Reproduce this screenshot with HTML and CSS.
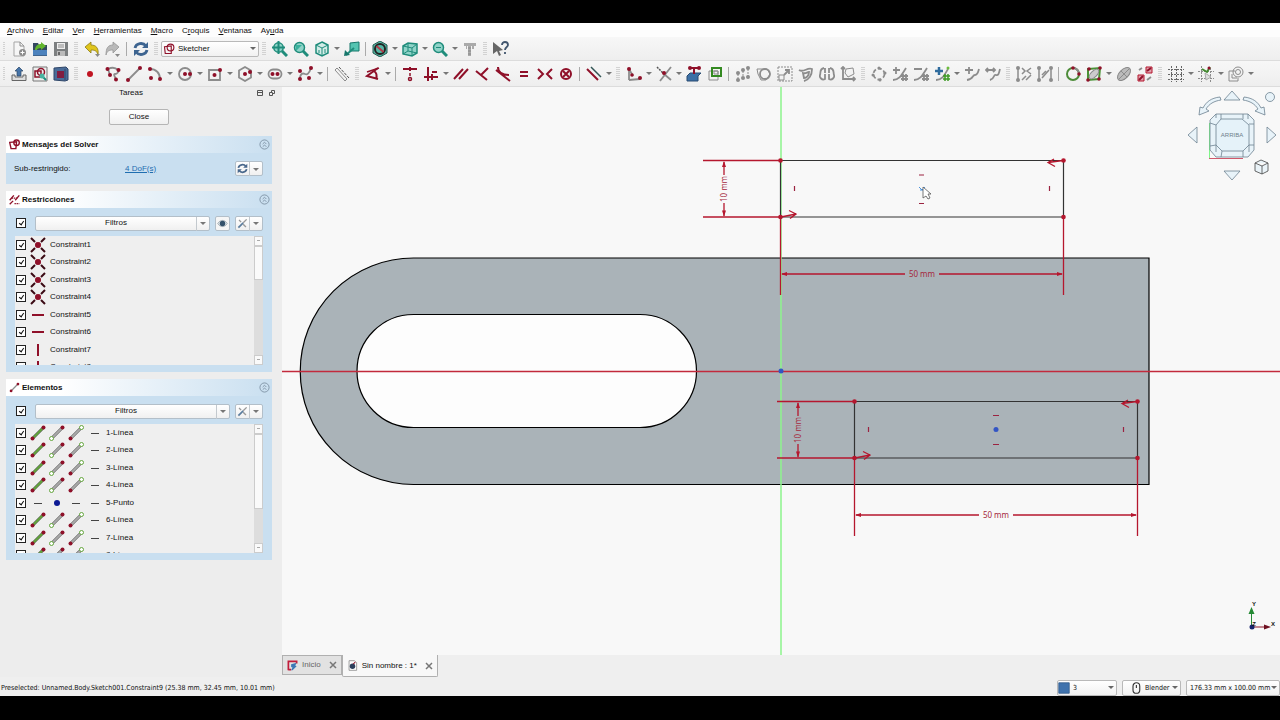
FILE: index.html
```
<!DOCTYPE html>
<html lang="es">
<head>
  <meta charset="UTF-8">
  <meta name="viewport" content="width=device-width, initial-scale=1.0">
  <title>Sin nombre : 1* - FreeCAD</title>
  <link rel="stylesheet" href="styles.css">
</head>
<body>

  <nav class="menubar">
    <button><u>A</u>rchivo</button>
    <button><u>E</u>ditar</button>
    <button><u>V</u>er</button>
    <button><u>H</u>erramientas</button>
    <button><u>M</u>acro</button>
    <button>C<u>r</u>oquis</button>
    <button><u>V</u>entanas</button>
    <button>Ay<u>u</u>da</button>
  </nav>

  <!-- File, view and navigation tools -->
  <div class="toolbar">
    <span class="grip"></span>
    <button class="tool" aria-label="Nuevo"><svg viewBox="0 0 16 16"><path class="paper" d="M3 1h6l4 4v10H3z"/><path class="g" d="M9 1v4h4"/><circle class="gf" cx="11.500" cy="11.500" r="3.500"/><path class="w" d="M9.500 11.500h4M11.500 9.500v4"/></svg></button>
    <button class="tool" aria-label="Abrir"><svg viewBox="0 0 16 16"><path fill="#33475f" d="M1 2h5l1 2h8v11H1z"/><path fill="#4c82bd" d="M1 9h14v5.500H1z"/><path fill="#61b42c" d="M3 9c0-4 3-6 6-6V1l5 4-5 4V7C6 7 5 8 5 9z"/></svg></button>
    <button class="tool" aria-label="Guardar"><svg viewBox="0 0 16 16"><path fill="#7c7f80" d="M1 1h14v14H1z"/><path fill="#eee" d="M4 2h8v6H4z"/><path fill="#bbb" d="M4 10h8v5H4z"/><path class="g" d="M5 4h6M5 6h6"/><path fill="#666" d="M5 11h2v3H5z"/></svg></button>
    <span class="grip"></span>
    <button class="tool" aria-label="Deshacer"><svg viewBox="0 0 16 16"><path fill="#e0c51c" stroke="#8a7a14" stroke-width=".8" d="M1 6l6-5v3c5 0 8 3 7 10-1-4-3-5-7-5v3z"/><path fill="#888" d="M11 13h5l-2.500 3z"/></svg></button>
    <button class="tool" aria-label="Rehacer"><svg viewBox="0 0 16 16"><path fill="#b9b9b9" stroke="#969696" stroke-width=".8" d="M14 6L8 1v3C3 4 1 7 1 14c1-4 3-5 7-5v3z"/><path fill="#888" d="M10 13h5l-2.500 3z"/></svg></button>
    <span class="sep"></span>
    <button class="tool" aria-label="Recargar"><svg viewBox="0 0 16 16"><path stroke="#3d6490" stroke-width="2.800" d="M2 7c1-5 8-6 11-2M14 9c-1 5-8 6-11 2"/><path fill="#3d6490" d="M15 1v6H9zM1 15V9h6z"/></svg></button>
    <span class="grip"></span>
    <label class="combo workbench">
      <svg viewBox="0 0 16 16"><path class="r" d="M2 5l9-1v10H3z"/><circle class="r" cx="10" cy="6" r="4.500"/></svg>
      <select aria-label="Banco de trabajo"><option>Sketcher</option></select>
    </label>
    <span class="grip"></span>
    <button class="tool" aria-label="Ajustar todo"><svg viewBox="0 0 16 16"><circle class="tb2" cx="6.500" cy="6.500" r="4.700"/><path class="t" stroke-width="3" d="M10 10l5 5"/><path class="t2" d="M6.500 0v13M0 6.500h13"/></svg></button>
    <button class="tool" aria-label="Ajustar selección"><svg viewBox="0 0 16 16"><circle class="tb2" cx="6.500" cy="6.500" r="5"/><path class="t" stroke-width="3" d="M10 10l5 5"/><path fill="#39b19c" d="M3 10V4h6z"/></svg></button>
    <button class="tool" aria-label="Isométrica"><svg viewBox="0 0 16 16"><path class="tb" d="M8 1l6 3v8l-6 3-6-3V4z"/><path class="t" d="M2 4l6 3 6-3M8 7v8M11 8v4M5 9v3"/></svg></button><button class="arrow" aria-label="Más vistas"></button>
    <button class="tool" aria-label="Alinear"><svg viewBox="0 0 16 16"><path fill="#54c4b1" stroke="#17766b" d="M6 2l9-1v9H6z"/><path class="t" stroke-width="2" d="M10 7l-8 7"/><path fill="#17766b" d="M0 15l1-6 5 5z"/></svg></button>
    <span class="sep"></span>
    <button class="tool" aria-label="Estilo de dibujo"><svg viewBox="0 0 16 16"><path fill="#54b8a5" stroke="#24574f" d="M8 0l7 4v8l-7 4-7-4V4z"/><circle cx="8" cy="8" r="5" stroke="#222" stroke-width="2"/><path stroke="#b33a48" stroke-width="2" d="M4.500 5l7 6"/></svg></button><button class="arrow" aria-label="Más estilos"></button>
    <button class="tool" aria-label="Caja"><svg viewBox="0 0 16 16"><path class="tb2" d="M1 5l5-3 9 1v9l-5 3-9-2z"/><path class="t" d="M1 5l9 2 5-4M10 7v8M6 2v8l-5 3M6 10l9 2"/></svg></button><button class="arrow" aria-label="Más cajas"></button>
    <button class="tool" aria-label="Zoom"><svg viewBox="0 0 16 16"><circle class="tb2" cx="6.500" cy="6.500" r="5"/><path class="t" stroke-width="3" d="M10 10l5 5"/><path class="t" d="M4 6.500h5"/></svg></button><button class="arrow" aria-label="Más zoom"></button>
    <button class="tool" aria-label="Medir"><svg viewBox="0 0 16 16"><path fill="#aaa" d="M2 2h12v3h-2v3h-2V5H9v10H6V5H5v3H4V5H2z"/><path stroke="#888" d="M6 7h3M6 10h3M6 13h3"/></svg></button>
    <span class="grip"></span>
    <button class="tool" aria-label="¿Qué es esto?"><svg viewBox="0 0 16 16"><path fill="#666" d="M0 1l10 8-4 1 2 4-2 1-2-5-4 3z"/><path stroke="#42566e" stroke-width="1.800" d="M9 4c0-4 6-4 6 0 0 2-3 2-3 5M12 11v2"/></svg></button>
  </div>

  <!-- Sketcher tools -->
  <div class="toolbar">
    <span class="grip"></span>
    <button class="tool" aria-label="Salir del croquis"><svg viewBox="0 0 16 16"><path fill="#ddd" stroke="#666" d="M1 9h3v2h8V9h3v5.500H1z"/><path fill="#4674a8" stroke="#2b4666" stroke-width=".7" d="M8 1l4 4h-2v5H6V5H4z"/></svg></button>
    <button class="tool" aria-label="Ver croquis"><svg viewBox="0 0 16 16"><path fill="#eee" stroke="#777" d="M1 1h14v14H1z"/><path class="r" d="M3 5h6v6H3z"/><circle class="r" cx="9" cy="6" r="3.500"/><path class="t" stroke-width="2" d="M10 10l4 4"/><circle fill="#49b3a0" cx="10" cy="10" r="2.500"/></svg></button>
    <button class="tool" aria-label="Ver sección"><svg viewBox="0 0 16 16"><path fill="#4a6c98" stroke="#2f4668" d="M1 2l12-1 2 2v11l-3 1-11-1z"/><path fill="#811d40" d="M4 5h7v7H4z"/><path stroke="#2f4668" d="M12 3v11"/></svg></button>
    <span class="grip"></span>
    <button class="tool" aria-label="Punto"><svg viewBox="0 0 16 16"><circle fill="#c01522" cx="6" cy="8" r="3"/></svg></button>
    <button class="tool" aria-label="Polilínea"><svg viewBox="0 0 16 16"><path class="g2" d="M3 3c4-2 8-1 10 1 1 2-1 4-3 4s0 3 1 5M3 3l2 6"/><circle class="rf" cx="2.500" cy="3" r="2"/><circle class="rf" cx="13.500" cy="4" r="2"/><circle class="rf" cx="5" cy="9" r="2"/><circle class="rf" cx="11" cy="13.500" r="2"/></svg></button>
    <button class="tool" aria-label="Línea"><svg viewBox="0 0 16 16"><path class="g2" d="M2 14L14 2"/><circle class="rf" cx="2" cy="14" r="2"/><circle class="rf" cx="14" cy="2" r="2"/></svg></button>
    <button class="tool" aria-label="Arco"><svg viewBox="0 0 16 16"><path class="g2" d="M3 3c6 0 10 4 10 10"/><circle class="rf" cx="3" cy="3" r="2"/><circle class="rf" cx="13" cy="13" r="2"/><circle class="rf" cx="4" cy="12" r="2"/></svg></button><button class="arrow" aria-label="Más arcos"></button>
    <button class="tool" aria-label="Círculo"><svg viewBox="0 0 16 16"><circle class="g2" cx="8" cy="8" r="6"/><circle class="rf" cx="8" cy="8" r="2"/><circle class="rf" cx="13" cy="8" r="2"/></svg></button><button class="arrow" aria-label="Más círculos"></button>
    <button class="tool" aria-label="Rectángulo"><svg viewBox="0 0 16 16"><path class="g2" d="M2 4h11v10H2z"/><circle class="rf" cx="7.500" cy="9" r="2"/><circle class="rf" cx="13" cy="4" r="2"/></svg></button><button class="arrow" aria-label="Más rectángulos"></button>
    <button class="tool" aria-label="Hexágono"><svg viewBox="0 0 16 16"><path class="g2" d="M8 1l6 3.500v7L8 15l-6-3.500v-7z"/><circle class="rf" cx="8" cy="8" r="2"/><circle class="rf" cx="13" cy="6" r="2"/></svg></button><button class="arrow" aria-label="Más polígonos"></button>
    <button class="tool" aria-label="Ranura"><svg viewBox="0 0 16 16"><rect class="g2" x="1.500" y="3.500" width="13" height="9" rx="4.500"/><circle class="rf" cx="5.500" cy="8" r="2"/><circle class="rf" cx="10.500" cy="8" r="2"/></svg></button><button class="arrow" aria-label="Más ranuras"></button>
    <button class="tool" aria-label="B-spline"><svg viewBox="0 0 16 16"><path class="g2" d="M3 13c0-6 3-6 5-5s4 0 6-6"/><circle class="rf" cx="3" cy="13" r="2"/><circle class="rf" cx="3" cy="5" r="2"/><circle class="rf" cx="14" cy="2" r="2"/><circle class="rf" cx="12" cy="12" r="2"/></svg></button><button class="arrow" aria-label="Más curvas"></button>
    <span class="sep"></span>
    <button class="tool" aria-label="Geometría de construcción"><svg viewBox="0 0 16 16"><path class="g" d="M1 4l10 11 2-2L3 2z"/><path stroke="#555" stroke-dasharray="3 1" d="M5 1l10 11"/></svg></button>
    <span class="grip"></span>
    <button class="tool" aria-label="Cota"><svg viewBox="0 0 16 16"><path class="r2" d="M13 2L2 10l11 3"/><path class="r2" d="M9 5c3 2 3 5 2 8"/><path class="r" d="M2 6l12-4"/></svg></button><button class="arrow" aria-label="Más cotas"></button>
    <span class="sep"></span>
    <button class="tool" aria-label="Coincidente"><svg viewBox="0 0 16 16"><path class="r2" d="M1 3h14M8 1v4"/><circle class="r" cx="8" cy="13" r="1.500"/><path class="r" d="M8 7v3"/></svg></button>
    <button class="tool" aria-label="Horizontal o vertical"><svg viewBox="0 0 16 16"><path class="r2" d="M5 1v14M1 11h14M9 6h5M9 8v6"/></svg></button><button class="arrow" aria-label="Más restricciones"></button>
    <button class="tool" aria-label="Paralela"><svg viewBox="0 0 16 16"><path class="r2" d="M1 13L10 3M6 13l9-10"/></svg></button>
    <button class="tool" aria-label="Perpendicular"><svg viewBox="0 0 16 16"><path class="r2" d="M2 5l11 9M14 2L7 9"/></svg></button>
    <button class="tool" aria-label="Tangente"><svg viewBox="0 0 16 16"><path class="r2" d="M3 1c0 5 4 8 11 8M1 4l14 11"/></svg></button>
    <button class="tool" aria-label="Igual"><svg viewBox="0 0 16 16"><path class="r2" d="M4 6h8M4 10h8"/></svg></button>
    <button class="tool" aria-label="Simetría"><svg viewBox="0 0 16 16"><path class="r2" d="M1 3l5 5-5 5M15 3l-5 5 5 5"/></svg></button>
    <button class="tool" aria-label="Bloquear"><svg viewBox="0 0 16 16"><circle class="r2" cx="8" cy="8" r="5"/><path class="r2" d="M5 5l6 6M11 5l-6 6"/></svg></button>
    <span class="sep"></span>
    <button class="tool" aria-label="Restricción de referencia"><svg viewBox="0 0 16 16"><path class="r2" d="M1 3l11 11"/><path stroke="#355" stroke-width="1.500" d="M5 1l10 10"/></svg></button><button class="arrow" aria-label="Más opciones"></button>
    <span class="grip"></span>
    <button class="tool" aria-label="Redondeo"><svg viewBox="0 0 16 16"><path class="g2" d="M3 2v12M3 14l11-1M3 3l4 7"/><circle class="rf" cx="3" cy="3" r="2"/><circle class="rf" cx="6" cy="9" r="1.800"/><circle class="rf" cx="14" cy="12" r="2"/></svg></button><button class="arrow" aria-label="Más redondeos"></button>
    <button class="tool" aria-label="Recortar"><svg viewBox="0 0 16 16"><path stroke="#555" stroke-width="1.500" stroke-dasharray="2 1" d="M1 1l7 7"/><path class="g2" d="M15 1L4 15M8 8l7 6"/><circle class="rf" cx="8" cy="7" r="2"/></svg></button><button class="arrow" aria-label="Más recortes"></button>
    <button class="tool" aria-label="Geometría externa"><svg viewBox="0 0 16 16"><path fill="#3c70a6" stroke="#284b70" d="M1 10l3-3h11l-3 3v5H1z"/><path class="r2" d="M4 2h9M8 2v6"/><circle class="rf" cx="4" cy="2" r="2"/><circle class="rf" cx="13" cy="2" r="2"/></svg></button>
    <button class="tool" aria-label="Copia al carbón"><svg viewBox="0 0 16 16"><path class="g" d="M2 5h9v9H2z"/><path stroke="#348a22" stroke-width="2" d="M5 2h9v8H5z"/><path class="g" d="M7 5h4v3H7z"/></svg></button>
    <span class="sep"></span>
    <button class="tool" aria-label="Mover"><svg viewBox="0 0 16 16"><path class="g" stroke-dasharray="2 1" d="M3 8v5M8 5v7M13 3v8"/><g class="gf"><circle cx="3" cy="7" r="2"/><circle cx="3" cy="14" r="2"/><circle cx="8" cy="4" r="2"/><circle cx="8" cy="12" r="2"/><circle cx="13" cy="2" r="2"/><circle cx="13" cy="11" r="2"/></g></svg></button>
    <button class="tool" aria-label="Rotar"><svg viewBox="0 0 16 16"><path class="g" d="M1 3h10l3 5-4 6H5L2 8z"/><circle class="g2" cx="9" cy="8" r="5"/></svg></button>
    <button class="tool" aria-label="Escalar"><svg viewBox="0 0 16 16"><path class="g" stroke-dasharray="2 1" d="M1 1h14v14H1z"/><path class="g" d="M2 9h5v5H2z"/><path class="g2" d="M7 9l5-5M8 4h4v4"/></svg></button>
    <button class="tool" aria-label="Desfase"><svg viewBox="0 0 16 16"><path class="g2" d="M1 4c5 3 8-3 13-1 0 6-3 11-8 12M5 7c3 1 4-1 6-1 0 3-2 6-5 6z"/></svg></button>
    <button class="tool" aria-label="Simetría de copia"><svg viewBox="0 0 16 16"><path class="g2" d="M5 2C0 3 2 7 1 9s2 6 5 4V8M11 2c5 1 3 5 4 7s-2 6-5 4V8M6 2v5M10 2v5"/></svg></button>
    <button class="tool" aria-label="Eliminar alineación"><svg viewBox="0 0 16 16"><path class="g2" d="M3 1v12h12M1 3l2-2 2 2M13 11l2 2-2 2"/><path class="g" d="M6 3l7-1 1 6-6 3-3-4z"/></svg></button>
    <span class="grip"></span>
    <button class="tool" aria-label="Polo"><svg viewBox="0 0 16 16"><circle class="g2" cx="8" cy="8" r="5.500" stroke-dasharray="4 2"/><g class="gf"><circle cx="8" cy="2" r="1.500"/><circle cx="14" cy="7" r="1.500"/><circle cx="2" cy="9" r="1.500"/><circle cx="9" cy="14" r="1.500"/></g></svg></button>
    <button class="tool" aria-label="Aumentar grado"><svg viewBox="0 0 16 16"><path class="g2" d="M4 1v7M1 4h7M1 14c6 0 8-4 13-12M11 8v7M14 8v7M9 10h7M9 13h7"/></svg></button>
    <button class="tool" aria-label="Reducir grado"><svg viewBox="0 0 16 16"><path class="g2" d="M1 3h8M1 14c6 0 8-4 13-12M11 8v7M14 8v7M9 10h7M9 13h7"/></svg></button>
    <button class="tool" aria-label="Aumentar multiplicidad"><svg viewBox="0 0 16 16"><path class="g2" d="M2 14c6 0 8-4 12-11"/><path stroke="#2f6b9d" stroke-width="2.500" d="M5 1v8M1 5h8"/><path stroke="#3e9b25" stroke-width="1.500" d="M11 8v7M14 8v7M9 10h7M9 13h7"/><circle fill="#6bbd3c" cx="14" cy="2" r="1.500"/></svg></button><button class="arrow" aria-label="Más multiplicidad"></button>
    <button class="tool" aria-label="Insertar nudo"><svg viewBox="0 0 16 16"><path class="g2" d="M5 1v7M1 4h8M3 14c7-1 5-5 8-5s3-3 4-6"/></svg></button>
    <button class="tool" aria-label="Unir curvas"><svg viewBox="0 0 16 16"><path class="g2" d="M1 4h9M3 2L1 4l2 2M8 2l2 2-2 2M5 14c5-1 3-6 6-5s3-3 4-6"/></svg></button>
    <span class="grip"></span>
    <button class="tool" aria-label="Seleccionar restricciones"><svg viewBox="0 0 16 16"><path class="g" stroke-width="1.500" d="M2 2v12M6 2l3 3-3 3M15 2l-4 3 4 3M6 14l4-4M10 14l5-5"/><g class="gf"><circle cx="2" cy="2" r="2"/><circle cx="2" cy="14" r="2"/></g></svg></button>
    <button class="tool" aria-label="Seleccionar elementos"><svg viewBox="0 0 16 16"><path class="g" stroke-width="1.500" d="M2 2v12M14 2v12M5 12l7-8M5 9l4-4"/><g class="gf"><circle cx="2" cy="2" r="2"/><circle cx="2" cy="14" r="2"/><circle cx="14" cy="2" r="2"/><circle cx="14" cy="14" r="2"/></g></svg></button>
    <span class="sep"></span>
    <button class="tool" aria-label="Geometría interna"><svg viewBox="0 0 16 16"><circle stroke="#4d8c39" stroke-width="2" cx="8" cy="8" r="6"/><path class="g2" d="M8 2a6 6 0 0 1 6 6"/><circle class="rf" cx="8" cy="2" r="1.800"/><circle class="rf" cx="14" cy="8" r="1.800"/></svg></button>
    <button class="tool" aria-label="Geometría asociada"><svg viewBox="0 0 16 16"><path stroke="#4a9235" stroke-width="2" d="M2 3l12-1-1 11-11 1z"/><ellipse fill="#ccc" stroke="#888" cx="8" cy="8" rx="6" ry="3" transform="rotate(-45 8 8)"/><circle class="rf" cx="3" cy="3" r="1.800"/><circle class="rf" cx="14" cy="2" r="1.800"/><circle class="rf" cx="2" cy="14" r="1.800"/><circle class="rf" cx="13" cy="13" r="1.800"/></svg></button><button class="arrow" aria-label="Más geometría"></button>
    <button class="tool" aria-label="Elipse"><svg viewBox="0 0 16 16"><ellipse fill="#bbb" stroke="#888" cx="8" cy="8" rx="8" ry="4.500" transform="rotate(-45 8 8)"/><path class="g" d="M3 13L13 3M5 5l6 6"/></svg></button>
    <button class="tool" aria-label="Cambiar espacio virtual"><svg viewBox="0 0 16 16"><path fill="#dfa0ab" stroke="#b5172e" d="M9 1h6v6H9zM1 9h6v6H1z"/><path class="r2" d="M10 5l4-3M2 14l4-4"/><path class="g2" d="M2 4l3-2M10 14l4-3"/></svg></button>
    <span class="grip"></span>
    <button class="tool" aria-label="Rejilla"><svg viewBox="0 0 16 16"><path stroke="#666" stroke-dasharray="2 1" d="M3.500 0v16M8.500 0v16M13.500 0v16M0 3.500h16M0 8.500h16M0 13.500h16"/></svg></button><button class="arrow" aria-label="Opciones de rejilla"></button>
    <button class="tool" aria-label="Ajuste"><svg viewBox="0 0 16 16"><path class="g" stroke-dasharray="2 1" d="M3.500 0v16M12.500 2v14M0 5.500h16M0 12.500h16"/><path stroke="#438b2f" stroke-width="2" d="M4 3l5 3 3-5"/><circle class="rf" cx="11" cy="2" r="1.500"/><path fill="#ddd" stroke="#aaa" d="M7 7l6 4-5 3z"/></svg></button><button class="arrow" aria-label="Opciones de ajuste"></button>
    <button class="tool" aria-label="Orden de visualización"><svg viewBox="0 0 16 16"><path class="g" d="M1 5h6M1 5v10h9v-3M4 8v4h5"/><circle class="g" cx="10" cy="6" r="5"/><circle class="g" cx="10" cy="6" r="2.500"/></svg></button><button class="arrow" aria-label="Más orden"></button>
  </div>

  <main class="workspace">

    <aside class="dock">
      <div class="dock-title">
        <h1>Tareas</h1>
        <button aria-label="Acoplar"><svg viewBox="0 0 8 8"><path d="M1.500 1.500h5v5h-5zM1.500 3.500h5"/></svg></button>
        <button aria-label="Flotar"><svg viewBox="0 0 8 8"><path d="M1.500 3.500h3v3h-3zM3.500 3.500v-2h3v3h-2"/></svg></button>
      </div>

      <button class="close-task">Close</button>

      <section class="panel">
        <header>
          <svg viewBox="0 0 16 16"><path class="r2" d="M1 5l10-1-1 10H3z"/><circle class="r2" cx="11" cy="5.500" r="4"/></svg>
          <h2>Mensajes del Solver</h2>
          <button class="fold" aria-label="Plegar"><svg viewBox="0 0 12 12"><circle cx="6" cy="6" r="5"/><path d="M4 5.500l2-2 2 2M4 8.500l2-2 2 2"/></svg></button>
        </header>
        <div class="solver">
          <span>Sub-restringido:</span>
          <a href="#">4 DoF(s)</a>
          <div class="split">
            <button aria-label="Actualizar"><svg viewBox="0 0 16 16"><path stroke="#49688c" stroke-width="2.500" d="M2 7c1-5 8-6 11-2M14 9c-1 5-8 6-11 2"/><path fill="#49688c" d="M15 1v6H9zM1 15V9h6z"/></svg></button>
            <button class="arrow" aria-label="Opciones"></button>
          </div>
        </div>
      </section>

      <section class="panel">
        <header>
          <svg viewBox="0 0 16 16"><path class="r2" d="M1 9l6-7M9 9l6-7M1 15l5-5"/><path class="r2" stroke-dasharray="2 1" d="M8 14h7M4 6h8"/></svg>
          <h2>Restricciones</h2>
          <button class="fold" aria-label="Plegar"><svg viewBox="0 0 12 12"><circle cx="6" cy="6" r="5"/><path d="M4 5.500l2-2 2 2M4 8.500l2-2 2 2"/></svg></button>
        </header>
        <div class="filter">
          <input type="checkbox" aria-label="Mostrar restricciones" checked>
          <div class="split wide">
            <button>Filtros</button>
            <button class="arrow" aria-label="Elegir filtros"></button>
          </div>
          <button class="eye" aria-label="Visibilidad"><svg viewBox="0 0 16 16"><path fill="#dfe6ea" stroke="#8b979f" d="M1 8c4-6 10-6 14 0-4 6-10 6-14 0z"/><circle fill="#34526b" cx="8" cy="8" r="4"/></svg></button>
          <div class="split">
            <button aria-label="Ajustes"><svg viewBox="0 0 16 16"><path stroke="#5b7d9e" stroke-width="2.500" d="M2 14l7-7"/><path stroke="#999" stroke-width="2" d="M9 7l5-5M3 3l3 3M9 9l4 4"/></svg></button>
            <button class="arrow" aria-label="Más ajustes"></button>
          </div>
        </div>
        <div class="list-box">
          <ul class="list" id="constraints"></ul>
          <div class="scroll"><i class="up"></i><b class="short"></b><i class="down"></i></div>
        </div>
      </section>

      <section class="panel">
        <header>
          <svg viewBox="0 0 16 16"><path class="g2" d="M3 13L13 3"/><circle class="rf" cx="3" cy="13" r="2"/><circle class="rf" cx="13" cy="3" r="2"/></svg>
          <h2>Elementos</h2>
          <button class="fold" aria-label="Plegar"><svg viewBox="0 0 12 12"><circle cx="6" cy="6" r="5"/><path d="M4 5.500l2-2 2 2M4 8.500l2-2 2 2"/></svg></button>
        </header>
        <div class="filter">
          <input type="checkbox" aria-label="Mostrar elementos" checked>
          <div class="split wide">
            <button>Filtros</button>
            <button class="arrow" aria-label="Elegir filtros"></button>
          </div>
          <div class="split">
            <button aria-label="Ajustes"><svg viewBox="0 0 16 16"><path stroke="#5b7d9e" stroke-width="2.500" d="M2 14l7-7"/><path stroke="#999" stroke-width="2" d="M9 7l5-5M3 3l3 3M9 9l4 4"/></svg></button>
            <button class="arrow" aria-label="Más ajustes"></button>
          </div>
        </div>
        <div class="list-box">
          <ul class="list" id="elements"></ul>
          <div class="scroll"><i class="up"></i><b class="long"></b><i class="down"></i></div>
        </div>
      </section>
    </aside>

    <div class="document">
      <div class="viewport">
        <svg class="sketch" viewBox="282 87 998 568" preserveAspectRatio="xMidYMid slice">
          <!-- solid body with its slot -->
          <path class="solid" d="M1149 258H413.500a113.250 113.250 0 0 0 0 226.500H1149z"/>
          <path class="hole" d="M413.500 314.500H640a56.500 56.500 0 0 1 0 113H413.500a56.500 56.500 0 0 1 0-113z"/>
          <!-- axes -->
          <path class="axis-y" d="M781 0V800"/>
          <path class="axis-x" d="M0 371.500H1600"/>
          <circle class="center" cx="781" cy="371" r="2.500"/>

          <g id="rect-top">
            <path class="edge" d="M780.500 160.500H1063.500V217H780.500z"/>
            <path class="dim" d="M703 160.500h77M703 217h77M724 162v13M724 203v13M780.500 217v78M1063.500 217v78M782 274h123M939 274h123"/>
            <path class="tip" d="M724 161l2 6h-4zM724 216.500l2-6h-4zM781 274l6-2v4zM1063 274l-6-2v4z"/>
            <path class="mark" d="M794.500 186v5M1049.500 186v5M919 175h5M919 203.500h5"/>
            <path class="mark-arrow" d="M1063 160.500l-15 2M1054 159l-6 3.500 7 4M781 217l15-3M789 210.500l7 3.500-6 4.500"/>
            <g class="vertex"><circle cx="780.500" cy="160.500" r="2.300"/><circle cx="1063.500" cy="160.500" r="2.300"/><circle cx="780.500" cy="217" r="2.300"/><circle cx="1063.500" cy="217" r="2.300"/></g>
            <text class="dim-text" x="922" y="277">50 mm</text>
            <text class="dim-text" transform="translate(727 189) rotate(-90)">10 mm</text>
          </g>

          <g id="rect-bottom">
            <path class="edge" d="M854.500 401.500H1137.500V458H854.500z"/>
            <path class="dim" d="M777 401.500h77M777 458h77M798 403v13M798 444v13M854.500 458v78M1137.500 458v78M856 515h123M1013 515h123"/>
            <path class="tip" d="M798 402l2 6h-4zM798 457.500l2-6h-4zM855 515l6-2v4zM1137 515l-6-2v4z"/>
            <path class="mark" d="M868.500 427v5M1123.500 427v5M993 415.500h6M993 444.500h6"/>
            <path class="mark-arrow" d="M1137 401.500l-15 2M1128 400l-6 3.500 7 4M855 458l15-3M863 451.500l7 3.500-6 4.500"/>
            <g class="vertex"><circle cx="854.500" cy="401.500" r="2.300"/><circle cx="1137.500" cy="401.500" r="2.300"/><circle cx="854.500" cy="458" r="2.300"/><circle cx="1137.500" cy="458" r="2.300"/></g>
            <circle class="center" cx="996" cy="429.500" r="2.500"/>
            <text class="dim-text" x="996" y="518">50 mm</text>
            <text class="dim-text" transform="translate(801 430) rotate(-90)">10 mm</text>
          </g>

          <!-- mouse pointer over the symmetry constraint -->
          <path class="hover" d="M919 187l3 3 3-3M920 190h3"/>
          <path class="pointer" d="M923 187v11l3-2 2 3 2-1-2-4h3z"/>
        </svg>

        <svg class="navcube" viewBox="0 2 100 105">
          <path stroke="#7ff58a" d="M29.500 38v35"/>
          <path stroke="#d0586c" d="M29 73.500h34"/>
          <path class="face" d="M36 29h32l6 6v30l-6 7H36l-6-7V35z"/>
          <path class="face" d="M41 34h21l7 6v20l-6 6H42l-6-6V40zM30 38l6 2M36 29v4M41 29v5M63 29v5M74 39h-5M30 61l6-1M74 60l-5 0M42 66l-1 6M63 66v6M68 29v5M36 60v7M69 60v7"/>
          <path class="face" d="M52 6l8 9H44zM52 95l8-9H44zM8 50l9-8v16zM96 50l-9-8v16zM40 12C31 13 26 17 23 23l-3-1-1 8 10-4-3-2c3-5 8-8 15-9zM64 12c9 1 14 5 17 11l3-1 1 8-10-4 3-2c-3-5-8-8-15-9z"/>
          <circle class="face" cx="90" cy="12" r="4.500"/>
          <path class="cube" d="M75 78l6-3 7 3v8l-6 3-7-3zM75 78l7 3 6-3M82 81v8"/>
          <text x="52" y="52">ARRIBA</text>
        </svg>

        <svg class="axes" viewBox="0 0 32 36">
          <path stroke="#258a35" d="M5.500 26V12"/><path fill="#258a35" d="M5.500 7l3 7h-6z"/>
          <path stroke="#8a1728" d="M6 27h14"/><path fill="#6d1020" d="M25 27l-7-2.500v5z"/>
          <circle fill="#16246d" cx="6" cy="27" r="2.500"/>
          <text x="8" y="6">Y</text><text x="27" y="26">X</text><text x="8" y="26">Z</text>
        </svg>
      </div>

      <div class="tabs">
        <div class="tab">
          <svg viewBox="0 0 16 16"><path stroke="#c11d3b" stroke-width="2.500" d="M2 15V2h12v3M2 14h4"/><path fill="#3d78b5" d="M6 6l8-2-2 4 2 1-6 6H6l2-4-2-1z"/></svg>
          <span>Inicio</span>
          <button aria-label="Cerrar Inicio"><svg viewBox="0 0 8 8"><path d="M1 1l6 6M7 1L1 7"/></svg></button>
        </div>
        <div class="tab active">
          <svg viewBox="0 0 16 16"><path fill="#fff" stroke="#777" d="M3 1h8l3 3v11H3z"/><circle fill="#2c3f5c" cx="8" cy="9" r="4"/><path class="r" d="M9 6l3-3"/></svg>
          <span>Sin nombre : 1*</span>
          <button aria-label="Cerrar Sin nombre"><svg viewBox="0 0 8 8"><path d="M1 1l6 6M7 1L1 7"/></svg></button>
        </div>
      </div>
    </div>
  </main>

  <footer class="statusbar">
    <p>Preselected: Unnamed.Body.Sketch001.Constraint9 (25.38 mm, 32.45 mm, 10.01 mm)</p>
    <label class="combo count">
      <svg viewBox="0 0 16 16"><path fill="#3f72ad" stroke="#2e5686" d="M1 1h14v14H1z"/></svg>
      <select aria-label="Notificaciones"><option>3</option></select>
    </label>
    <label class="combo nav">
      <svg viewBox="0 0 16 16"><rect x="4" y="1" width="9" height="14" rx="4.500" stroke="#333" stroke-width="1.500"/><path stroke="#333" stroke-width="1.500" d="M8.500 4v4"/></svg>
      <select aria-label="Estilo de navegación"><option>Blender</option></select>
    </label>
    <label class="combo size">
      <select aria-label="Dimensiones"><option>176.33 mm x 100.00 mm</option></select>
    </label>
  </footer>

  <script src="script.js"></script>
</body>
</html>
```

FILE: styles.css
```
/* Global styles */
* {
  margin: 0;
  padding: 0;
  box-sizing: border-box;
  font-family: 'Liberation Sans', sans-serif;
}

body {
  background: #efefef;
  color: #111;
  font-size: 8px;
  line-height: 12px;
  height: 100vh;
  display: flex;
  flex-direction: column;
  border-top: 23px solid #000;
  border-bottom: 24px solid #000;
  overflow: hidden;
}

button,
select {
  font-size: 8px;
  line-height: 12px;
  color: inherit;
  border: none;
  background: none;
}

svg {
  display: block;
  fill: none;
}

/* Icon strokes and fills */
.r { stroke: #8f1029; stroke-width: 1.5; }
.r2 { stroke: #8f1029; stroke-width: 2; }
.rf { fill: #8f1029; }
.g { stroke: #8c8c8c; }
.g2 { stroke: #8c8c8c; stroke-width: 1.8; }
.gf { fill: #8c8c8c; }
.w { stroke: #fff; }
.paper { fill: #f6f6f6; stroke: #a5a5a5; }
.t { stroke: #1f8c7b; }
.t2 { stroke: #1f8c7b; stroke-width: 2; }
.tb { fill: #d3ece7; stroke: #1f8c7b; stroke-width: 1.5; }
.tb2 { fill: #8fd3c8; stroke: #1f8c7b; stroke-width: 1.5; }

/* Menu and toolbars */
.menubar {
  display: flex;
  gap: 9px;
  height: 14px;
  padding: 2px 7px 0;
  background: #fdfdfd;
}

.menubar button {
  height: 12px;
}

.toolbar {
  display: flex;
  align-items: center;
  height: 24px;
  background: linear-gradient(#f7f7f7, #eee);
  border-bottom: 1px solid #dcdcdc;
}

.toolbar + .toolbar {
  height: 26px;
}

.tool {
  width: 21px;
  height: 20px;
  flex: none;
}

.tool svg {
  width: 16px;
  height: 16px;
  margin: auto;
}

.arrow {
  width: 9px;
  height: 14px;
  flex: none;
}

.arrow::before {
  content: "";
  display: block;
  width: 0;
  margin: auto;
  border: 3px solid transparent;
  border-width: 3px 3px 0;
  border-top-color: #777;
}

.grip {
  width: 10px;
  height: 14px;
  flex: none;
  border: 3px solid transparent;
  border-width: 0 3px;
  background: repeating-linear-gradient(#d2d2d2 0 1px, transparent 1px 2px) content-box;
}

.grip:first-child {
  width: 8px;
}

.sep {
  width: 7px;
  height: 14px;
  flex: none;
  border: 3px solid transparent;
  border-width: 0 3px;
  background: #aaa;
  background-clip: padding-box;
}

.combo {
  display: flex;
  align-items: center;
  height: 16px;
  border: 1px solid #b9b9b9;
  border-radius: 2px;
  background: linear-gradient(#fff, #f1f1f1);
}

.combo svg {
  width: 12px;
  height: 12px;
  flex: none;
}

.combo select {
  appearance: none;
  flex: 1;
  min-width: 0;
  padding: 0 0 0 3px;
}

.combo::after {
  content: "";
  border: 3px solid transparent;
  border-width: 3px 3px 0;
  border-top-color: #666;
  margin-right: 2px;
}

.workbench {
  width: 98px;
  padding-left: 1px;
}

/* Main area */
.workspace {
  flex: 1;
  min-height: 0;
  display: flex;
}

.dock {
  width: 282px;
  flex: none;
  padding: 0 10px 0 6px;
  background: #ededed;
}

.dock-title {
  display: flex;
  align-items: center;
  height: 12px;
  margin-right: -8px;
}

.dock-title h1 {
  flex: 1;
  font-size: 8px;
  font-weight: normal;
  text-align: center;
}

.dock-title svg {
  width: 8px;
  height: 8px;
  margin-right: 4px;
  stroke: #555;
}

.close-task {
  display: block;
  width: 60px;
  height: 16px;
  margin: 10px auto 11px;
  border: 1px solid #b5b5b5;
  border-radius: 2px;
  background: linear-gradient(#fff, #f0f0f0);
}

.panel {
  margin-bottom: 7px;
  background: #c9dff0;
}

.panel header {
  display: flex;
  align-items: center;
  height: 17px;
  padding: 0 2px 0 3px;
  background: linear-gradient(90deg, #fff 20%, #c9dff0);
}

.panel header svg {
  width: 11px;
  height: 11px;
}

.panel h2 {
  flex: 1;
  padding-left: 2px;
  font-size: 8px;
  font-weight: bold;
}

.fold svg {
  stroke: #7f93a5;
}

.solver {
  display: flex;
  align-items: center;
  height: 31px;
  padding: 0 9px 0 8px;
}

.solver span {
  width: 111px;
}

.solver a {
  flex: 1;
  color: #1f6eb0;
}

.split {
  display: flex;
  height: 15px;
  border: 1px solid #b3bfc9;
  border-radius: 2px;
  background: linear-gradient(#fff, #f0f0f0);
}

.split button {
  width: 13px;
}

.split .arrow {
  border-left: 1px solid #c3c9ce;
}

.split svg,
.eye svg {
  width: 11px;
  height: 11px;
  margin: auto;
}

.split.wide {
  flex: 1;
}

.split.wide button:first-child {
  flex: 1;
}

.filter {
  display: flex;
  align-items: center;
  gap: 5px;
  height: 28px;
  padding: 2px 9px 0 10px;
}

.filter .wide {
  margin-left: 4px;
}

.eye {
  width: 15px;
  height: 15px;
  border: 1px solid #b3bfc9;
  border-radius: 2px;
  background: #f6f6f6;
}

input[type="checkbox"] {
  appearance: none;
  width: 10px;
  height: 10px;
  flex: none;
  border: 1px solid #222;
  background: #fff;
}

input[type="checkbox"]:checked::before {
  content: "";
  display: block;
  width: 2px;
  height: 4px;
  margin: 1px auto;
  border: solid #111;
  border-width: 0 1px 1px 0;
  transform: rotate(35deg);
}

.list-box {
  display: flex;
  height: 129px;
  margin: 0 9px;
  background: #efefef;
}

.panel:nth-of-type(n+2) {
  padding-bottom: 7px;
}

.list {
  flex: 1;
  overflow: hidden;
  list-style: none;
}

.list li,
.list label {
  display: flex;
  align-items: center;
  height: 17px;
}

.list li:nth-child(even) {
  height: 18px;
}

.list input {
  margin: 0 4px 0 1px;
}

.list svg {
  width: 16px;
  height: 16px;
  margin-right: 3px;
  flex: none;
}

#constraints span {
  padding-left: 1px;
}

.scroll {
  width: 9px;
  display: flex;
  flex-direction: column;
  background: #ddd;
}

.scroll i,
.scroll b {
  border: 1px solid #ccc;
  background: #fafafa;
}

.scroll i {
  height: 10px;
}

.scroll i::before {
  content: "";
  display: block;
  width: 3px;
  margin: 3px auto;
  border-top: 1px solid #aaa;
}

.scroll .down {
  margin-top: auto;
}

.short {
  height: 34px;
}

.long {
  height: 75px;
}

/* 3D view */
.document {
  flex: 1;
  min-width: 0;
  display: flex;
  flex-direction: column;
}

.viewport {
  flex: 1;
  min-height: 0;
  position: relative;
  background: #f8f8f8;
}

.sketch {
  width: 100%;
  height: 100%;
}

.solid { fill: #aab3b8; stroke: #000; stroke-width: 1.2; }
.hole { fill: #fdfdfd; stroke: #000; stroke-width: 1.2; }
.axis-x { stroke: #c22a3c; stroke-width: 1.3; }
.axis-y { stroke: #8df58d; stroke-width: 1.5; }
.edge { stroke: #333; stroke-width: 1.2; }
.dim { stroke: #b5172e; stroke-width: 1.3; }
.tip,
.vertex { fill: #b5172e; }
.mark { stroke: #9b2340; stroke-width: 1.2; }
.mark-arrow { stroke: #b5172e; stroke-width: 1.3; }
.center { fill: #3355c4; }
.hover { stroke: #4b93dd; }
.pointer { fill: #fff; stroke: #555; stroke-width: .8; }

.dim-text {
  fill: #a5283c;
  font-family: 'Noto Sans', sans-serif;
  font-size: 8px;
  text-anchor: middle;
}

.navcube {
  position: absolute;
  top: 0;
  right: 0;
  width: 100px;
  height: 105px;
}

.face { fill: #e4f1f9; fill-opacity: .8; stroke: #6d8291; stroke-width: .8; }
.cube { fill: #eaf3f8; stroke: #444; stroke-width: .8; }

.navcube text {
  fill: #6e7e8a;
  font-size: 6px;
  text-anchor: middle;
}

.axes {
  position: absolute;
  right: 2px;
  bottom: 19px;
  width: 32px;
  height: 36px;
}

.axes text {
  fill: #111;
  font-size: 6px;
  font-weight: bold;
  text-anchor: middle;
}

/* Document tabs and status bar */
.tabs {
  display: flex;
  align-items: flex-start;
  height: 22px;
}

.tab {
  display: flex;
  align-items: center;
  height: 20px;
  padding: 0 4px;
  border: 1px solid #b0b0b0;
  background: #e2e2e2;
  color: #666;
}

.tab.active {
  height: 22px;
  border-top: none;
  border-radius: 0 0 2px 2px;
  background: #f8f8f8;
  color: #111;
}

.tab svg {
  width: 11px;
  height: 11px;
}

.tab span {
  padding: 0 8px 0 4px;
}

.tab button svg {
  width: 8px;
  height: 8px;
  stroke: #777;
  stroke-width: 1.5;
}

.statusbar {
  display: flex;
  align-items: center;
  gap: 5px;
  height: 19px;
  padding: 2px 0 0 1px;
}

.statusbar p,
.statusbar select {
  font-family: 'DejaVu Sans Condensed', 'DejaVu Sans', sans-serif;
  font-size: 7px;
}

.statusbar p {
  flex: 1;
}

.count { width: 60px; }
.nav { width: 59px; padding-left: 7px; }
.size { width: 94px; }
```

FILE: script.js
```
const cross = '<svg viewBox="0 0 16 16"><path stroke="#3b0a14" stroke-width="2" d="M1 1l4 4M15 1l-4 4M1 15l4-4M15 15l-4-4"/><path class="r" d="M6 6l4 4M10 6l-4 4"/><circle class="rf" cx="8" cy="8" r="3"/></svg>';
const horizontal = '<svg viewBox="0 0 16 16"><path class="r2" d="M2 8h12"/></svg>';
const vertical = '<svg viewBox="0 0 16 16"><path class="r2" d="M8 2v12"/></svg>';
const dash = '<svg viewBox="0 0 16 16"><path stroke="#444" d="M4 8.500h8"/></svg>';
const dot = '<svg viewBox="0 0 16 16"><circle fill="#0d1b94" cx="8" cy="8" r="3"/></svg>';

// line icon with the edge, start or end point highlighted
function line(part) {
  const edge = part === 'edge' ? '#63a53c' : '#aaa';
  const start = part === 'start' ? 'fill="#fff" stroke="#63a53c"' : 'class="rf"';
  const end = part === 'end' ? 'fill="#fff" stroke="#63a53c"' : 'class="rf"';
  return `<svg viewBox="0 0 16 16"><path stroke="#555" stroke-width="3" d="M2 14L14 2"/><path stroke="${edge}" stroke-width="2" d="M2 14L14 2"/><circle ${start} cx="2.500" cy="13.500" r="2"/><circle ${end} cx="13.500" cy="2.500" r="2"/></svg>`;
}

const icons = [cross, cross, cross, cross, horizontal, horizontal, vertical, vertical];
document.getElementById('constraints').innerHTML = icons.map((icon, i) =>
  `<li><label><input type="checkbox" checked>${icon}<span>Constraint${i + 1}</span></label></li>`
).join('');

const names = ['Línea', 'Línea', 'Línea', 'Línea', 'Punto', 'Línea', 'Línea', 'Línea'];
document.getElementById('elements').innerHTML = names.map((name, i) => {
  const parts = name === 'Punto' ? dash + dot + dash : line('edge') + line('start') + line('end');
  return `<li><label><input type="checkbox" checked>${parts}${dash}<span>${i + 1}-${name}</span></label></li>`;
}).join('');
```
